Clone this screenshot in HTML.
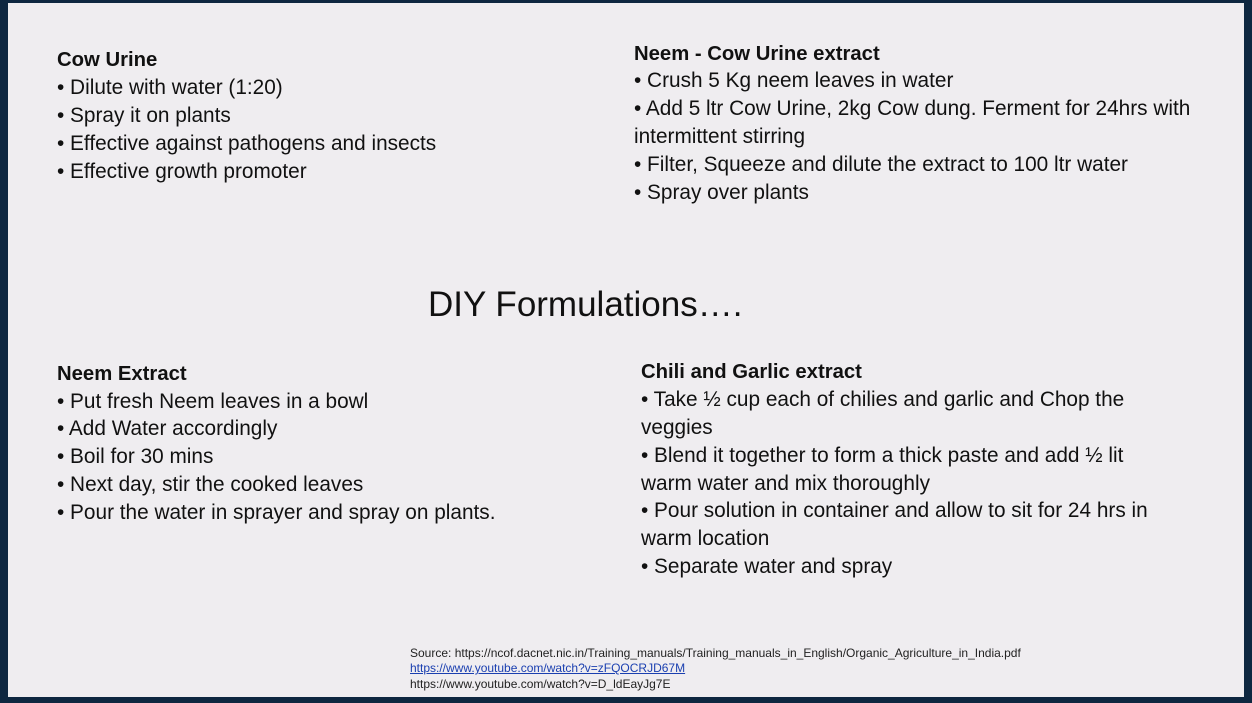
<!DOCTYPE html>
<html><head><meta charset="utf-8"><style>
body{margin:0;width:1252px;height:703px;background:#0e2740;position:relative;overflow:hidden;font-family:"Liberation Sans",sans-serif;color:#111}
.slide{position:absolute;left:8px;top:3px;width:1236px;height:694px;background:#efedf0}
.l{position:absolute;font-size:20.8px;line-height:24px;white-space:nowrap}
.b{font-weight:bold;font-size:20.3px}
.s{position:absolute;left:410px;font-size:12px;line-height:13px;white-space:nowrap;color:#222}
</style></head><body><div class="slide"></div>
<div class="l b" style="left:57px;top:48px">Cow Urine</div>
<div class="l" style="left:57px;top:76px">• Dilute with water (1:20)</div>
<div class="l" style="left:57px;top:104px">• Spray it on plants</div>
<div class="l" style="left:57px;top:132px">• Effective against pathogens and insects</div>
<div class="l" style="left:57px;top:160px">• Effective growth promoter</div>

<div class="l b" style="left:634px;top:42px">Neem - Cow Urine extract</div>
<div class="l" style="left:634px;top:69px">• Crush 5 Kg neem leaves in water</div>
<div class="l" style="left:634px;top:97px">• Add 5 ltr Cow Urine, 2kg Cow dung. Ferment for 24hrs with</div>
<div class="l" style="left:634px;top:125px">intermittent stirring</div>
<div class="l" style="left:634px;top:153px">• Filter, Squeeze and dilute the extract to 100 ltr water</div>
<div class="l" style="left:634px;top:181px">• Spray over plants</div>

<div class="l" style="left:428px;top:284px;font-size:35px;line-height:42px">DIY Formulations….</div>

<div class="l b" style="left:57px;top:362px">Neem Extract</div>
<div class="l" style="left:57px;top:390px">• Put fresh Neem leaves in a bowl</div>
<div class="l" style="left:57px;top:417px">• Add Water accordingly</div>
<div class="l" style="left:57px;top:445px">• Boil for 30 mins</div>
<div class="l" style="left:57px;top:473px">•  Next day, stir the cooked leaves</div>
<div class="l" style="left:57px;top:501px">• Pour the water in sprayer and spray on plants.</div>

<div class="l b" style="left:641px;top:360px">Chili and Garlic extract</div>
<div class="l" style="left:641px;top:388px">• Take ½ cup each of chilies and garlic and Chop the</div>
<div class="l" style="left:641px;top:416px">veggies</div>
<div class="l" style="left:641px;top:444px">• Blend it together to form a thick paste and add ½ lit</div>
<div class="l" style="left:641px;top:472px">warm water and mix thoroughly</div>
<div class="l" style="left:641px;top:499px">• Pour solution in container and allow to sit for 24 hrs in</div>
<div class="l" style="left:641px;top:527px">warm location</div>
<div class="l" style="left:641px;top:555px">• Separate water and spray</div>

<div class="s" style="top:647px">Source: https://ncof.dacnet.nic.in/Training_manuals/Training_manuals_in_English/Organic_Agriculture_in_India.pdf</div>
<div class="s" style="top:662px;color:#1a3fb0;text-decoration:underline">https://www.youtube.com/watch?v=zFQOCRJD67M</div>
<div class="s" style="top:678px">https://www.youtube.com/watch?v=D_ldEayJg7E</div>
</body></html>
